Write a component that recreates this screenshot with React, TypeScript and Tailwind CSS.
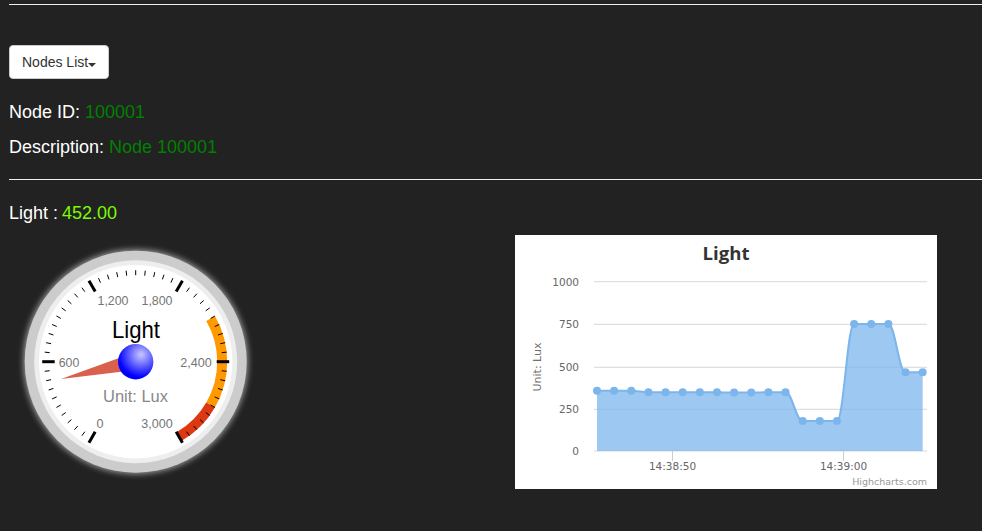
import React from "react";

const CX = 126.7;
const CY = 126.7;

const polar = (deg: number, r: number) => {
  const a = ((deg - 90) * Math.PI) / 180;
  return { x: CX + r * Math.cos(a), y: CY + r * Math.sin(a) };
};

const valueAngle = (v: number) => -150 + (v / 3000) * 300;

const band = (from: number, to: number, r1: number, r2: number) => {
  const a = polar(valueAngle(from), r1);
  const b = polar(valueAngle(to), r1);
  const c = polar(valueAngle(to), r2);
  const d = polar(valueAngle(from), r2);
  return `M${a.x} ${a.y}A${r1} ${r1} 0 0 1 ${b.x} ${b.y}L${c.x} ${c.y}A${r2} ${r2} 0 0 0 ${d.x} ${d.y}Z`;
};

const Gauge = () => {
  const ticks: React.ReactNode[] = [];
  for (let i = 0; i <= 50; i++) {
    const deg = -150 + i * 6;
    const major = i % 10 === 0;
    const p1 = polar(deg, major ? 93.5 : 91.5);
    const p2 = polar(deg, major ? 81 : 86.5);
    ticks.push(
      <line key={i} x1={p1.x} y1={p1.y} x2={p2.x} y2={p2.y} stroke="#000" strokeWidth={major ? 3 : 1} />
    );
  }
  const labels: [string, number, number, number][] = [
    ["1,200", 104, 65.5, 31],
    ["1,800", 148, 65.5, 31],
    ["600", 60, 127, 20.5],
    ["2,400", 187, 127, 31.5],
    ["0", 91, 188, 7],
    ["3,000", 148, 188, 31.5],
  ];
  return (
    <svg width="260" height="254" className="shrink-0" style={{ fontFamily: '"Liberation Sans", sans-serif' }}>
      <defs>
        <filter id="glow" x="-20%" y="-20%" width="140%" height="140%">
          <feGaussianBlur stdDeviation="3" />
        </filter>
        <radialGradient id="hub" cx="0.65" cy="0.3" r="0.75">
          <stop offset="0" stopColor="#c8c8ff" />
          <stop offset="0.85" stopColor="#0000ff" />
          <stop offset="1" stopColor="#0000f4" />
        </radialGradient>
      </defs>
      <circle cx={CX} cy={CY} r={112} fill="#fff" opacity="0.6" filter="url(#glow)" />
      <circle cx={CX} cy={CY} r={111} fill="#cccccc" />
      <circle cx={CX} cy={CY} r={101.5} fill="#eeeeee" />
      <circle cx={CX} cy={CY} r={96.7} fill="#ffffff" />
      <path d={band(2100, 2700, 91.5, 81.5)} fill="#ff9900" />
      <path d={band(2700, 3000, 91.5, 81.5)} fill="#dc3912" />
      {ticks}
      {labels.map(([t, x, y, w]) => (
        <text
          key={t}
          x={x}
          y={y}
          textAnchor="middle"
          dominantBaseline="central"
          fontSize="13.5"
          fill="#757575"
          textLength={w}
          lengthAdjust="spacingAndGlyphs"
        >
          {t}
        </text>
      ))}
      <text
        x={127}
        y={94}
        textAnchor="middle"
        dominantBaseline="central"
        fontSize="24"
        fill="#000"
        textLength={48}
        lengthAdjust="spacingAndGlyphs"
      >
        Light
      </text>
      <text
        x={126.5}
        y={161}
        textAnchor="middle"
        dominantBaseline="central"
        fontSize="16"
        fill="#888"
        textLength={65}
        lengthAdjust="spacingAndGlyphs"
      >
        Unit: Lux
      </text>
      <polygon points={`52,144 ${CX - 2},${CY - 9} ${CX + 2},${CY + 8}`} fill="#d9604c" />
      <circle cx={CX} cy={CY} r={17.7} fill="url(#hub)" />
    </svg>
  );
};

const PTS: [number, number][] = [
  155.7, 155.7, 155.7, 157.3, 157.3, 157.3, 157.3, 157.3, 157.5, 157.5, 157.3, 157.3, 186, 186, 186, 89, 89, 89, 137.3, 137.3,
].map((y, i) => [82 + i * 17.14, y] as [number, number]);

const splinePath = (pts: [number, number][]) => {
  const s = 1.5;
  const d = 2.5;
  let path = `M${pts[0][0]} ${pts[0][1]}`;
  let prevR: [number, number] = pts[0];
  for (let i = 1; i < pts.length; i++) {
    const [x, y] = pts[i];
    const [lx, ly] = pts[i - 1];
    const next = pts[i + 1];
    let cl: [number, number] = [x, y];
    let cr: [number, number] = [x, y];
    if (next) {
      const [nx, ny] = next;
      const lcx = (s * x + lx) / d;
      let lcy = (s * y + ly) / d;
      const rcx = (s * x + nx) / d;
      let rcy = (s * y + ny) / d;
      const corr = ((rcy - lcy) * (rcx - x)) / (rcx - lcx) + y - rcy;
      lcy += corr;
      rcy += corr;
      if (lcy > ly && lcy > y) {
        lcy = Math.max(ly, y);
        rcy = 2 * y - lcy;
      } else if (lcy < ly && lcy < y) {
        lcy = Math.min(ly, y);
        rcy = 2 * y - lcy;
      }
      if (rcy > ny && rcy > y) {
        rcy = Math.max(ny, y);
        lcy = 2 * y - rcy;
      } else if (rcy < ny && rcy < y) {
        rcy = Math.min(ny, y);
        lcy = 2 * y - rcy;
      }
      cl = [lcx, lcy];
      cr = [rcx, rcy];
    }
    path += `C${prevR[0]} ${prevR[1]} ${cl[0]} ${cl[1]} ${x} ${y}`;
    prevR = cr;
  }
  return path;
};

const LightChart = () => {
  const line = splinePath(PTS);
  const area = `${line}L${PTS[PTS.length - 1][0]} 216L${PTS[0][0]} 216Z`;
  const grid: [number, string][] = [
    [46.7, "1000"],
    [89.3, "750"],
    [132.3, "500"],
    [174.3, "250"],
    [216, "0"],
  ];
  const font = '"DejaVu Sans", sans-serif';
  return (
    <svg width="422" height="254" className="shrink-0 bg-white" style={{ fontFamily: font }}>
      <text
        x={211}
        y={18}
        textAnchor="middle"
        dominantBaseline="central"
        fontSize="18"
        fontWeight="700"
        fill="#333"
        textLength={47}
        lengthAdjust="spacingAndGlyphs"
        style={{ fontFamily: '"Open Sans", sans-serif' }}
      >
        Light
      </text>
      {grid.map(([y, t]) => (
        <g key={t}>
          <line x1={79} x2={412} y1={y} y2={y} stroke="#d8d8d8" strokeWidth={1} />
          <text x={64} y={y} textAnchor="end" dominantBaseline="central" fontSize="10.5" fill="#666">
            {t}
          </text>
        </g>
      ))}
      <path d={area} fill="#7cb5ec" fillOpacity="0.75" />
      <path d={line} fill="none" stroke="#7cb5ec" strokeWidth={2} />
      {PTS.map(([x, y], i) => (
        <circle key={i} cx={x} cy={y} r={4} fill="#7cb5ec" />
      ))}
      <line x1={157.5} x2={157.5} y1={216} y2={226} stroke="#c0d0e0" />
      <line x1={328.5} x2={328.5} y1={216} y2={226} stroke="#c0d0e0" />
      <text x={157.5} y={231} textAnchor="middle" dominantBaseline="central" fontSize="10.5" fill="#666">
        14:38:50
      </text>
      <text x={328.5} y={231} textAnchor="middle" dominantBaseline="central" fontSize="10.5" fill="#666">
        14:39:00
      </text>
      <text
        x={0}
        y={0}
        transform="translate(22 132) rotate(-90)"
        textAnchor="middle"
        dominantBaseline="central"
        fontSize="11"
        fill="#707070"
      >
        Unit: Lux
      </text>
      <text x={412} y={246} textAnchor="end" dominantBaseline="central" fontSize="9.5" fill="#999">
        Highcharts.com
      </text>
    </svg>
  );
};

export default function App() {
  return (
    <div className="min-h-[531px] overflow-hidden bg-[#222222] pl-[9px] pt-1 text-[18px] leading-[25px] text-white font-['Liberation_Sans',sans-serif]">
      <hr className="border-0 border-t border-[#eeeeee]" />
      <button className="mt-10 flex h-[34px] w-[100px] items-center rounded border border-[#cccccc] bg-white pl-3 text-sm text-[#333333]">
        Nodes List
        <span className="mt-[5px] border-x-4 border-t-4 border-x-transparent border-t-[#333333]" />
      </button>
      <p className="mt-[21px]">
        Node ID: <span className="text-[#008000]">100001</span>
      </p>
      <p className="mt-[10px]">
        Description: <span className="text-[#008000]">Node 100001</span>
      </p>
      <hr className="mt-[19px] border-0 border-t border-[#eeeeee]" />
      <p className="mt-[21px]">
        Light : <span className="-ml-px text-[#7cfc00]">452.00</span>
      </p>
      <div className="mt-[9px] flex">
        <div className="w-[506px] shrink-0">
          <Gauge />
        </div>
        <LightChart />
      </div>
    </div>
  );
}
